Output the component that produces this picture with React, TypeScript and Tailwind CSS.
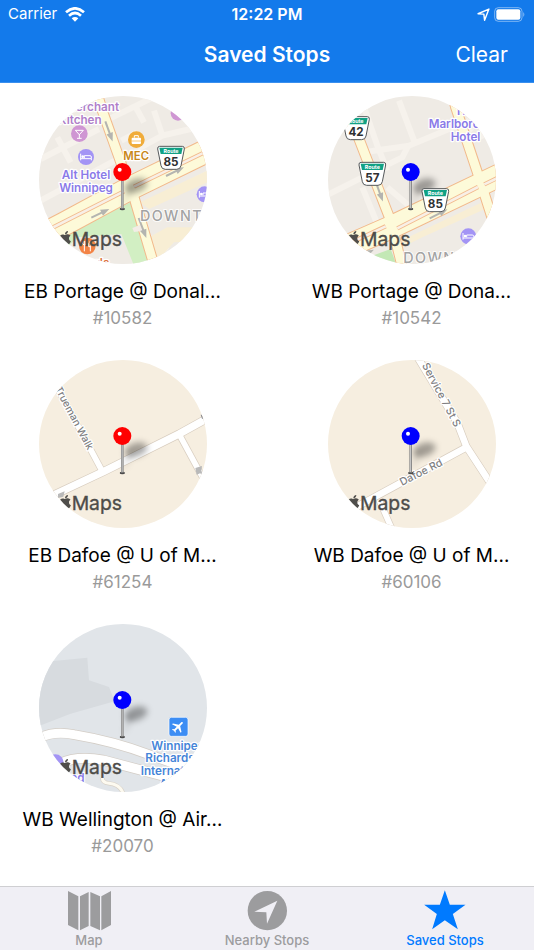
import type { ReactNode } from "react";
import { FaApple } from "react-icons/fa";
import { MdFlight } from "react-icons/md";

const FONT = "font-['Inter','Liberation_Sans',sans-serif]";

type LabelProps = {
  x: number;
  y: number;
  children: string;
  color?: string;
  size?: number;
  weight?: number;
  anchor?: "start" | "middle" | "end";
  rotate?: number;
  halo?: string;
};

function Label({ x, y, children, color = "#8a7ae8", size = 35, weight = 600, anchor = "start", rotate = 0, halo = "#ffffff" }: LabelProps) {
  return (
    <text
      x={x}
      y={y}
      fill={color}
      stroke={halo}
      strokeWidth={7}
      strokeLinejoin="round"
      paintOrder="stroke"
      fontSize={size}
      fontWeight={weight}
      textAnchor={anchor}
      transform={`rotate(${rotate} ${x} ${y})`}
    >
      {children}
    </text>
  );
}

type Road = { d: string; w: number };

function Roads({ roads, casing, fill, edge = 3 }: { roads: Road[]; casing: string; fill: string; edge?: number }) {
  return (
    <g fill="none" strokeLinejoin="round">
      {roads.map((r) => (
        <path key={r.d} d={r.d} stroke={casing} strokeWidth={r.w + edge * 2} />
      ))}
      {roads.map((r) => (
        <path key={r.d} d={r.d} stroke={fill} strokeWidth={r.w} />
      ))}
    </g>
  );
}

function Median({ d }: { d: string }) {
  return (
    <g fill="none">
      <path d={d} stroke="#f2b98b" strokeWidth={13} />
      <path d={d} stroke="#f8efe6" strokeWidth={8} />
    </g>
  );
}

function Arrow({ x, y, angle, length = 56 }: { x: number; y: number; angle: number; length?: number }) {
  return (
    <g transform={`translate(${x} ${y}) rotate(${angle})`} fill="#b4b4b0">
      <rect x={0} y={-3} width={length - 20} height={6} />
      <path d={`M${length - 26} -10 L${length} 0 L${length - 26} 10 Z`} />
    </g>
  );
}

function RouteSign({ x, y, route }: { x: number; y: number; route: string }) {
  return (
    <g transform={`translate(${x} ${y})`}>
      <path d="M7 2 H75 Q82 2 81 10 L71 60 Q69 71 58 71 H24 Q13 71 11 60 L1 10 Q0 2 7 2 Z" fill="#fff" stroke="#55585a" strokeWidth={3} />
      <path d="M6 6 H76 L72 25 H10 Z" fill="#11a184" />
      <text x={41} y={21} fontSize={16} fontWeight={700} fill="#fff" textAnchor="middle">Route</text>
      <text x={41} y={60} fontSize={35} fontWeight={700} fill="#2e3032" textAnchor="middle">{route}</text>
    </g>
  );
}

function Bed({ x, y, r = 24 }: { x: number; y: number; r?: number }) {
  return (
    <g transform={`translate(${x} ${y})`}>
      <circle r={r} fill="#a394f5" />
      <path d="M-16 -10 V10 M-16 5 H16 V10 M16 5 V0 Q16 -4 12 -4 H-5 V3" fill="none" stroke="#fff" strokeWidth={3} />
      <circle cx={-10} cy={-1} r={4} fill="#fff" />
    </g>
  );
}

function PinAndBrand({ color }: { color: string }) {
  return (
    <g>
      <g transform="translate(69 418)">
        <FaApple size={48} color="#4f4e4b" />
      </g>
      <text x={113} y={467} fontSize={58} fontWeight={400} fill="#4d4c49" stroke="#4d4c49" strokeWidth={1}>Maps</text>
      <g className="blur-[9px]">
        <ellipse cx={306} cy={285} rx={35} ry={20} fill="#000" opacity={0.34} transform="rotate(-18 306 285)" />
        <path d="M268 350 L300 294 L280 288 Z" fill="#000" opacity={0.14} />
      </g>
      <ellipse cx={265} cy={355} rx={8} ry={4} fill="#4b4b4b" />
      <rect x={261} y={266} width={8} height={88} fill="#8b8b8b" />
      <rect x={263} y={266} width={3} height={86} fill="#c4c4c4" />
      <circle cx={265} cy={244} r={27} fill={color} />
      <circle cx={257} cy={237} r={6} fill="#fff" />
    </g>
  );
}

function PortageEast() {
  return (
    <g>
      <rect width={540} height={540} fill="#efebe5" />
      <g fill="none" stroke="#f6f2ec" strokeWidth={18}>
        <path d="M20 205 L195 115 M70 140 L110 215 M215 90 L480 -40 M300 40 L330 95 M20 330 L260 200" />
        <path d="M262 150 L300 130 L320 170 L385 135 L470 115 M385 135 L360 60" />
        <path d="M420 300 L520 250 M330 430 L400 480" />
      </g>
      <path d="M318 335 L520 240 V275 L345 355 Z M345 440 L400 410 L520 410 V450 L420 455 L370 510 Z" fill="#f8eed4" />
      <path d="M95 430 L290 335 L345 525 H300 L262 430 L130 440 L90 480 Z" fill="#d2efc3" />
      <Roads
        casing="#f2b98b"
        fill="#fdfad9"
        roads={[
          { d: "M-10 452 L90 400 L290 292 L540 170", w: 68 },
          { d: "M190 10 L205 60 L262 220 L300 320 L362 530", w: 27 },
        ]}
      />
      <Median d="M30 424 L270 302" />
      <Median d="M300 288 L530 176" />
      <path d="M295 412 L320 402 L328 420 L300 424 Z" fill="#f3ece6" />
      <Arrow x={214} y={92} angle={70} length={64} />
      <Arrow x={172} y={381} angle={-26} length={60} />
      <Arrow x={396} y={256} angle={-26} length={60} />
      <Arrow x={314} y={382} angle={69} length={64} />
      <Label x={255} y={60} anchor="end" color="#b07fc9">Merchant</Label>
      <Label x={203} y={99} anchor="end" color="#b07fc9">Kitchen</Label>
      <circle cx={136} cy={129} r={25} fill="#cf96d3" />
      <path d="M124 119 H148 L136 132 Z M136 130 V143 M129 143 H143" fill="none" stroke="#fff" strokeWidth={3} />
      <circle cx={432} cy={68} r={22} fill="#cf96d3" />
      <circle cx={307} cy={147} r={25} fill="#f0ac3a" />
      <rect x={293} y={141} width={28} height={19} rx={3} fill="#fff" />
      <path d="M301 141 V135 H313 V141" fill="none" stroke="#fff" strokeWidth={3} />
      <path d="M293 151 H321" stroke="#f0ac3a" strokeWidth={2} />
      <Label x={268} y={209} color="#c98719" size={34}>MEC</Label>
      <Bed x={156} y={199} />
      <Label x={156} y={264} anchor="middle">Alt Hotel</Label>
      <Label x={156} y={303} anchor="middle">Winnipeg</Label>
      <Bed x={512} y={311} />
      <text x={318} y={390} fontSize={43} fontWeight={500} fill="#a3a3a3" stroke="#fff" strokeWidth={5} paintOrder="stroke" className="tracking-widest">DOWNTOWN</text>
      <RouteSign x={370} y={165} route="85" />
      <circle cx={160} cy={466} r={25} fill="#f38345" />
      <path d="M151 451 V482 M146 451 V460 Q151 466 156 460 V451 M169 482 V451 Q163 456 164 468 H169" fill="none" stroke="#fff" strokeWidth={3} />
      <Label x={226} y={530} anchor="end" color="#dc7440">Earls</Label>
    </g>
  );
}

function PortageWest() {
  return (
    <g>
      <rect width={540} height={540} fill="#efebe5" />
      <g fill="none" stroke="#f6f2ec" strokeWidth={18}>
        <path d="M120 35 L165 165 L195 240 M125 185 L260 165 L440 90 M230 30 L275 150 M20 310 L120 260 M120 290 L165 400 M500 50 L440 120 M450 150 L520 115" />
        <path d="M190 225 L240 200 L258 165 M195 290 L260 345" />
      </g>
      <path d="M235 450 L500 325 V350 L300 440 L240 470 Z" fill="#f8eed4" />
      <path d="M150 495 L205 475 L225 530 H130 Z" fill="#c3e8b5" />
      <Roads
        casing="#f2b98b"
        fill="#fdfad9"
        roads={[
          { d: "M0 500 L210 408 L540 250", w: 66 },
          { d: "M85 90 L110 145 L205 390 L240 530", w: 27 },
          { d: "M390 10 L400 50 L475 275 L515 400", w: 27 },
        ]}
      />
      <Median d="M60 468 L190 407" />
      <Median d="M225 413 L467 289" />
      <Median d="M486 281 L540 255" />
      <Arrow x={164} y={284} angle={70} length={52} />
      <Arrow x={322} y={383} angle={-27} length={60} />
      <Arrow x={110} y={500} angle={-27} length={50} />
      <Label x={430} y={73} anchor="middle">The</Label>
      <Label x={319} y={113}>Marlborough</Label>
      <Label x={385} y={152}>Hotel</Label>
      <RouteSign x={60} y={76} route="42" />
      <RouteSign x={109} y={213} route="57" />
      <Bed x={438} y={437} />
      <text x={243} y={517} fontSize={43} fontWeight={500} fill="#a3a3a3" stroke="#fff" strokeWidth={5} paintOrder="stroke" className="tracking-widest">DOWNTOWN</text>
    </g>
  );
}

function DafoeEast() {
  return (
    <g>
      <rect width={540} height={540} fill="#f6eee0" />
      <Roads
        casing="#d8cdbf"
        fill="#ffffff"
        edge={2}
        roads={[
          { d: "M40 430 L210 350 L435 238 L540 180", w: 22 },
          { d: "M60 80 L205 350", w: 17 },
          { d: "M435 238 L510 376", w: 17 },
        ]}
      />
      <path d="M72 418 L92 410 L88 426 L72 430 Z M484 340 L504 334 L502 348 L508 362 L498 356 L488 360 Z" fill="#b9b9b9" />
      <path d="M500 180 H512 V192 H504 Z" fill="#85858a" />
      <Label x={161} y={288} anchor="end" rotate={62} size={31} weight={500} color="#7f7f82">Trueman Walk</Label>
    </g>
  );
}

function DafoeWest() {
  return (
    <g>
      <rect width={540} height={540} fill="#f6eee0" />
      <Roads
        casing="#d8cdbf"
        fill="#ffffff"
        edge={2}
        roads={[
          { d: "M275 -10 L405 205 L432 275 L505 387", w: 20 },
          { d: "M60 480 L170 420 L432 278", w: 20 },
          { d: "M170 435 L212 530", w: 17 },
        ]}
      />
      <Label x={298} y={32} rotate={62} size={32} weight={500} color="#7f7f82">Service 7 St S</Label>
      <Label x={239} y={394} rotate={-27} size={32} weight={500} color="#7f7f82">Dafoe Rd</Label>
    </g>
  );
}

function Wellington() {
  return (
    <g>
      <rect width={540} height={540} fill="#e1e5e9" />
      <path d="M0 130 L60 127 L160 117 L165 185 L225 205 L242 248 L110 285 L0 328 Z" fill="#d7dbdf" />
      <Roads
        casing="#d3cdc6"
        fill="#ffffff"
        edge={2}
        roads={[
          { d: "M10 360 Q60 335 120 348 Q240 368 345 408 L520 470", w: 27 },
          { d: "M80 434 Q130 410 210 425 L400 475 L520 520", w: 28 },
        ]}
      />
      <path d="M205 478 Q205 492 225 494 Q258 497 268 525" fill="none" stroke="#d8d2c8" strokeWidth={13} />
      <path d="M205 478 Q205 492 225 494 Q258 497 268 525" fill="none" stroke="#fdfaf0" strokeWidth={9} />
      <circle cx={64} cy={432} r={25} fill="#a394f5" />
      <Label x={152} y={490} anchor="end">Ground</Label>
      <rect x={405} y={296} width={57} height={57} rx={7} fill="#3c8df4" stroke="#fff" strokeWidth={2} />
      <g transform="translate(433 325) rotate(45) translate(-23 -23)">
        <MdFlight size={46} color="#fff" />
      </g>
      <Label x={352} y={393} color="#4585d8">Winnipeg</Label>
      <Label x={334} y={431} color="#4585d8">Richardson</Label>
      <Label x={320} y={470} color="#4585d8">International</Label>
      <Label x={376} y={509} color="#4585d8">Airport</Label>
    </g>
  );
}

type Stop = { name: string; code: string; pin: string; viewBox: string; map: ReactNode; over?: ReactNode };

const LEFT = "15 16 504 504";
const RIGHT = "17 16 504 504";

const stops: Stop[] = [
  { name: "EB Portage @ Donal…", code: "#10582", pin: "#ff0000", viewBox: LEFT, map: <PortageEast /> },
  { name: "WB Portage @ Dona…", code: "#10542", pin: "#0000ff", viewBox: RIGHT, map: <PortageWest />, over: <RouteSign x={298} y={292} route="85" /> },
  { name: "EB Dafoe @ U of M…", code: "#61254", pin: "#ff0000", viewBox: LEFT, map: <DafoeEast /> },
  { name: "WB Dafoe @ U of M…", code: "#60106", pin: "#0000ff", viewBox: RIGHT, map: <DafoeWest /> },
  { name: "WB Wellington @ Air…", code: "#20070", pin: "#0000ff", viewBox: LEFT, map: <Wellington /> },
];

function StopCard({ stop }: { stop: Stop }) {
  return (
    <li>
      <button type="button" className="flex w-full flex-col items-center">
        <svg viewBox={stop.viewBox} aria-hidden="true" className="size-42 shrink-0 overflow-hidden rounded-full">
          {stop.map}
          <PinAndBrand color={stop.pin} />
          {stop.over}
        </svg>
        <span className="mt-4 text-[19px] leading-6 whitespace-nowrap text-black">{stop.name}</span>
        <span className="mt-0.5 text-[17px] leading-6 text-[#9a9a9a]">{stop.code}</span>
      </button>
    </li>
  );
}

function StatusBar() {
  return (
    <div className="grid h-7 grid-cols-[1fr_auto_1fr] items-center px-2 text-[15px] leading-7">
      <div className="flex items-center gap-2">
        <span>Carrier</span>
        <svg viewBox="0 0 60 45" aria-hidden="true" className="h-[15px] w-5" fill="none" stroke="#fff" strokeWidth={8}>
          <path d="M3 16 Q30 -8 57 16" />
          <path d="M12 26 Q30 10 48 26" />
          <path d="M30 44 L20 34 Q30 26 40 34 Z" fill="#fff" stroke="none" />
        </svg>
      </div>
      <span className="text-base leading-7 font-semibold">12:22 PM</span>
      <div className="flex items-center justify-end gap-1">
        <svg viewBox="0 0 36 36" aria-hidden="true" className="size-[13px]" fill="none" stroke="#fff" strokeWidth={4} strokeLinejoin="round">
          <path d="M3 16 L33 3 L21 34 L19 17 Z" />
        </svg>
        <svg viewBox="0 0 96 45" aria-hidden="true" className="h-[15px] w-8">
          <rect x={2} y={2} width={82} height={41} rx={11} fill="none" stroke="#fff" strokeOpacity={0.45} strokeWidth={3} />
          <rect x={7} y={7} width={72} height={31} rx={6} fill="#fff" />
          <path d="M88 15 Q94 22 88 30 Z" fill="#fff" fillOpacity={0.5} />
        </svg>
      </div>
    </div>
  );
}

function MapIcon() {
  return (
    <svg viewBox="200 29 135 123" aria-hidden="true" className="h-[41px] w-[45px]" fill="currentColor">
      <path d="M203 32 L234 48 V150 L203 134 Z M239 48 L265 35 V137 L239 150 Z M270 35 L299 48 V150 L270 137 Z M303 48 L332 32 V134 L303 150 Z" />
    </svg>
  );
}

function NearbyIcon() {
  return (
    <svg viewBox="0 0 123 123" aria-hidden="true" className="size-[41px]">
      <circle cx={61} cy={62} r={59} fill="currentColor" />
      <path d="M91 32 L22 65 L58 67 L60 101 Z" fill="#f0eff5" />
    </svg>
  );
}

function StarIcon() {
  return (
    <svg viewBox="470 29 125 123" aria-hidden="true" className="h-[41px] w-[42px]" fill="currentColor">
      <path d="M532 30 L547 73 L594 73 L556 101 L571 147 L532 120 L494 147 L508 101 L470 73 L517 73 Z" />
    </svg>
  );
}

const tabs = [
  { label: "Map", icon: <MapIcon />, active: false },
  { label: "Nearby Stops", icon: <NearbyIcon />, active: false },
  { label: "Saved Stops", icon: <StarIcon />, active: true },
];

export default function App() {
  return (
    <div className={`flex min-h-screen flex-col bg-white ${FONT}`}>
      <header className="border-b border-[#3a8fee] bg-[#137aeb] text-white">
        <StatusBar />
        <div className="grid h-[54px] grid-cols-[1fr_auto_1fr] items-center px-[26px]">
          <h1 className="col-start-2 text-[21px] leading-7 font-semibold">Saved Stops</h1>
          <button type="button" className="justify-self-end text-[21px] leading-7">Clear</button>
        </div>
      </header>
      <main className="flex-1 pt-[13px]">
        <ul className="grid grid-cols-2 gap-x-11 gap-y-[30px]">
          {stops.map((stop) => (
            <StopCard key={stop.code} stop={stop} />
          ))}
        </ul>
      </main>
      <nav className="grid h-16 shrink-0 grid-cols-3 border-t border-[#cfcfd2] bg-[#f0eff5]">
        {tabs.map((tab) => (
          <button
            key={tab.label}
            type="button"
            aria-current={tab.active ? "page" : undefined}
            className={`flex flex-col items-center pt-[3px] ${tab.active ? "text-[#007aff]" : "text-[#9c9c9e]"}`}
          >
            {tab.icon}
            <span className="text-[13px] leading-[18px] font-medium">{tab.label}</span>
          </button>
        ))}
      </nav>
    </div>
  );
}
